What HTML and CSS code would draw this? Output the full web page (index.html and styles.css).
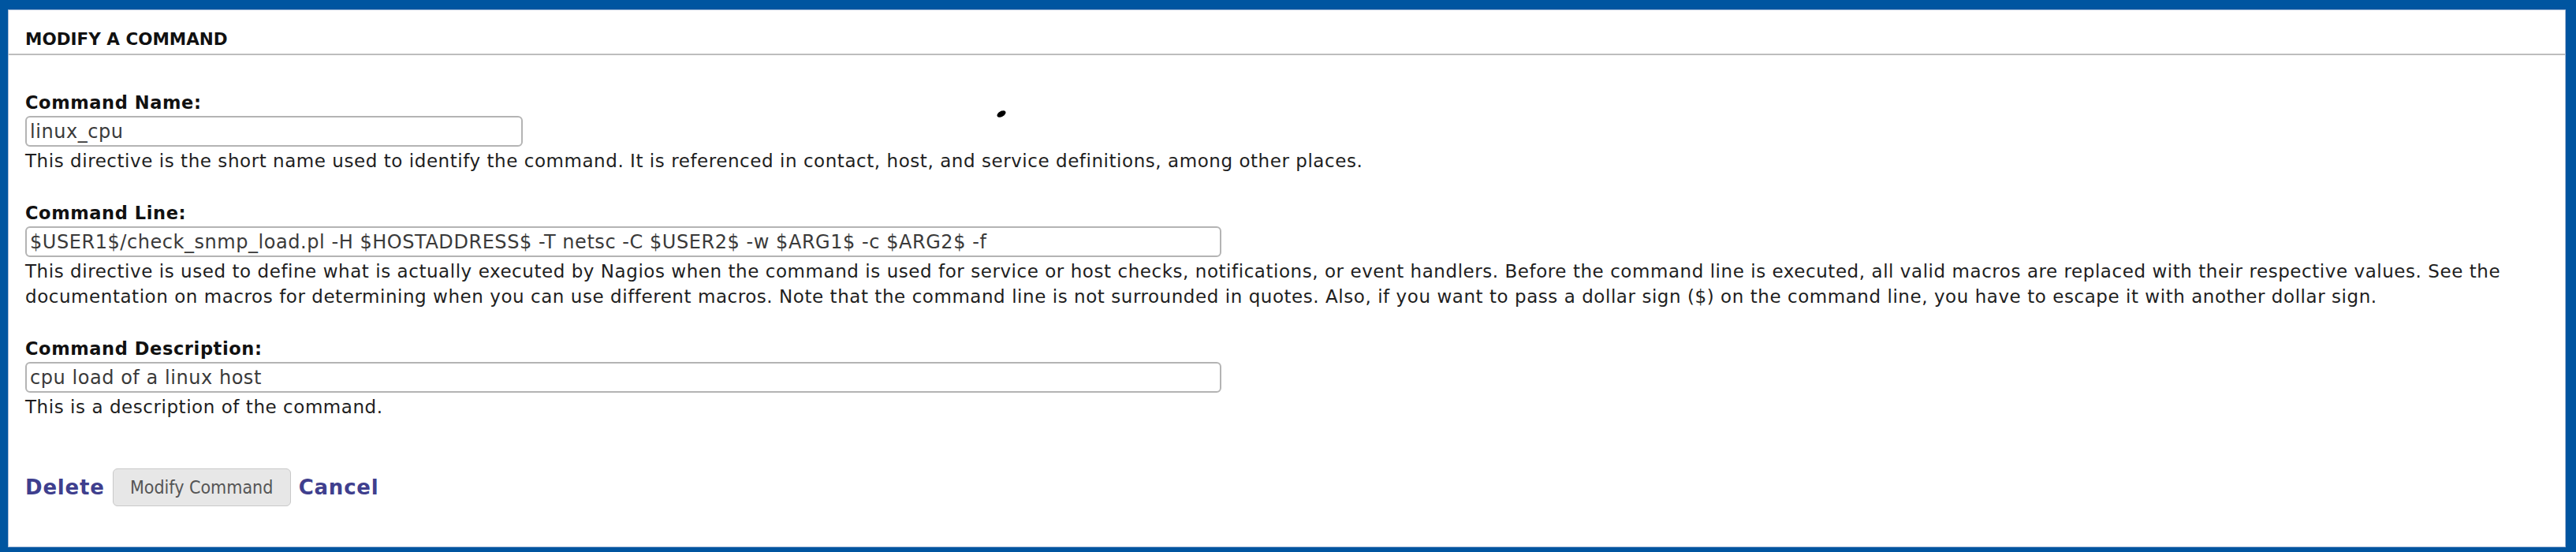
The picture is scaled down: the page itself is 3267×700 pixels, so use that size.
FILE: index.html
```html
<!DOCTYPE html>
<html>
<head>
<meta charset="utf-8">
<link rel="stylesheet" href="styles.css">
</head>
<body>
<div class="panel">
  <div class="panel-head">MODIFY A COMMAND</div>
  <form class="form">
    <div class="field">
      <label class="label">Command Name:</label>
      <input class="input input-short" type="text" value="linux_cpu">
      <div class="desc">This directive is the short name used to identify the command. It is referenced in contact, host, and service definitions, among other places.</div>
    </div>
    <div class="field">
      <label class="label">Command Line:</label>
      <input class="input input-long" type="text" value="$USER1$/check_snmp_load.pl -H $HOSTADDRESS$ -T netsc -C $USER2$ -w $ARG1$ -c $ARG2$ -f">
      <div class="desc">This directive is used to define what is actually executed by Nagios when the command is used for service or host checks, notifications, or event handlers. Before the command line is executed, all valid macros are replaced with their respective values. See the documentation on macros for determining when you can use different macros. Note that the command line is not surrounded in quotes. Also, if you want to pass a dollar sign ($) on the command line, you have to escape it with another dollar sign.</div>
    </div>
    <div class="field">
      <label class="label">Command Description:</label>
      <input class="input input-long" type="text" value="cpu load of a linux host">
      <div class="desc">This is a description of the command.</div>
    </div>
    <div class="actions">
      <a class="link" href="#">Delete</a>
      <button class="btn" type="button">Modify Command</button>
      <a class="link" href="#">Cancel</a>
    </div>
  </form>
  <span class="blob"></span>
</div>
</body>
</html>
```
FILE: styles.css
```css
html, body {
  height: 100%;
  margin: 0;
}
body {
  box-sizing: border-box;
  background: #0055a0;
  padding: 12px 13px 6px 10px;
  font-family: "DejaVu Sans", Verdana, sans-serif;
  color: #1a1a1a;
}
.panel {
  position: relative;
  box-sizing: border-box;
  height: 100%;
  background: #fff;
  border: 1px solid #a9bcd8;
}
.panel-head {
  font-weight: bold;
  font-size: 21.5px;
  line-height: 26px;
  padding: 24px 21px 5px;
  color: #111;
  border-bottom: 2px solid #bdbdbd;
}
.form {
  padding: 46px 21px 0;
  display: flex;
  flex-direction: column;
}
.field {
  display: flex;
  flex-direction: column;
  align-items: flex-start;
  margin-bottom: 36px;
}
.label {
  font-weight: bold;
  font-size: 22.5px;
  letter-spacing: 0.6px;
  line-height: 28px;
  color: #111;
}
.input {
  box-sizing: border-box;
  height: 39px;
  margin-top: 3px;
  padding: 0 4px;
  border: 2px solid #b4b4b4;
  border-radius: 6px;
  font-family: "DejaVu Sans", Verdana, sans-serif;
  font-size: 24px;
  letter-spacing: 0.55px;
  color: #3a3a3a;
  background: #fff;
}
.input-short { width: 631px; }
.input-long { width: 1517px; }
.desc {
  margin-top: 2px;
  font-size: 23px;
  letter-spacing: 0.55px;
  line-height: 32px;
  color: #1e1e1e;
}
.actions {
  display: flex;
  align-items: center;
  gap: 10px;
  margin-top: 26px;
}
.link {
  font-weight: bold;
  font-size: 26px;
  letter-spacing: 0.8px;
  color: #3f3f8e;
  text-decoration: none;
}
.btn {
  box-sizing: border-box;
  height: 48px;
  width: 226px;
  padding: 0;
  border: 1px solid #c9c9c9;
  border-radius: 6px;
  background: #e7e7e7;
  font-family: "DejaVu Sans Condensed", "DejaVu Sans", sans-serif;
  font-stretch: condensed;
  font-size: 23px;
  color: #555;
}
.blob {
  position: absolute;
  left: 1253px;
  top: 128px;
  width: 12px;
  height: 7px;
  background: #000;
  border-radius: 50%;
  transform: rotate(-30deg);
}
```
